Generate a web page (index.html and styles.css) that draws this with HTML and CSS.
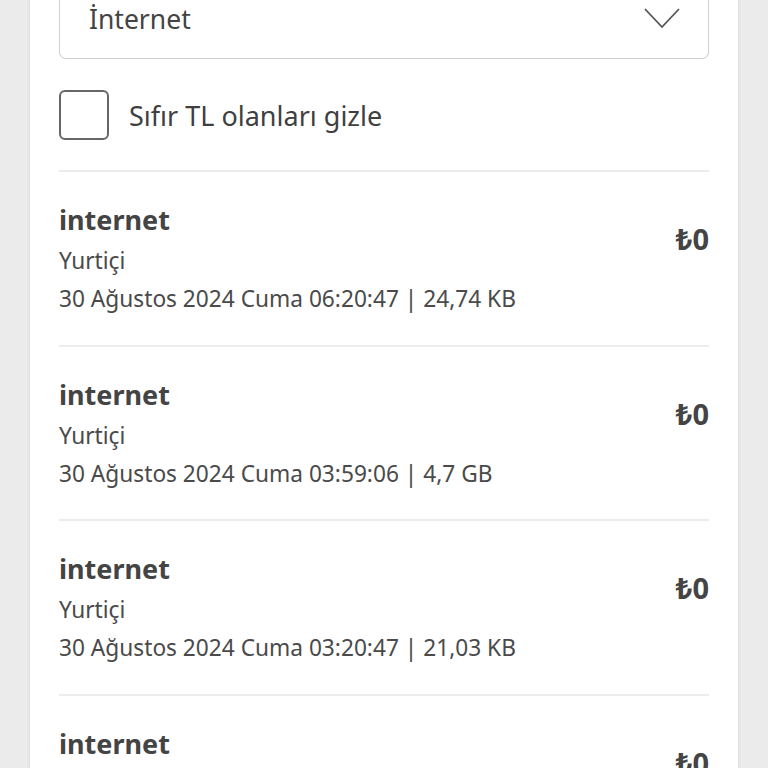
FILE: index.html
```html
<!DOCTYPE html>
<html lang="tr">
<head>
    <meta charset="UTF-8">
    <meta name="viewport" content="width=device-width, initial-scale=1.0">
    <title>Kullanım Detayları</title>
    <link rel="stylesheet" href="styles.css">
</head>
<body>
    <div class="card">
        <div class="select">
            <span class="select-value">İnternet</span>
            <svg class="chevron" width="36" height="22" viewBox="0 0 36 22">
                <path d="M1 1 L18 19 L35 1" fill="none" stroke="#555" stroke-width="1.8"/>
            </svg>
        </div>
        <label class="check">
            <span class="box"></span>
            <span class="check-label">Sıfır TL olanları gizle</span>
        </label>
        <ul class="list">
            <li class="item">
                <div class="info">
                    <div class="title">internet</div>
                    <div class="sub">Yurtiçi</div>
                    <div class="sub">30 Ağustos 2024 Cuma 06:20:47 | 24,74 KB</div>
                </div>
                <div class="amount">₺0</div>
            </li>
            <li class="item">
                <div class="info">
                    <div class="title">internet</div>
                    <div class="sub">Yurtiçi</div>
                    <div class="sub">30 Ağustos 2024 Cuma 03:59:06 | 4,7 GB</div>
                </div>
                <div class="amount">₺0</div>
            </li>
            <li class="item">
                <div class="info">
                    <div class="title">internet</div>
                    <div class="sub">Yurtiçi</div>
                    <div class="sub">30 Ağustos 2024 Cuma 03:20:47 | 21,03 KB</div>
                </div>
                <div class="amount">₺0</div>
            </li>
            <li class="item">
                <div class="info">
                    <div class="title">internet</div>
                    <div class="sub">Yurtiçi</div>
                    <div class="sub">30 Ağustos 2024 Cuma 02:40:12 | 12,5 KB</div>
                </div>
                <div class="amount">₺0</div>
            </li>
        </ul>
    </div>
</body>
</html>
```

FILE: styles.css
```css
body {
    margin: 0;
    padding: 0;
    background-color: #ebebeb;
    font-family: "Noto Sans", sans-serif;
    color: #4a4a4a;
    overflow: hidden;
    height: 768px;
}
.card {
    margin: 0 30px;
    padding: 0 29px;
    background: white;
    box-shadow: 0 0 3px rgba(0, 0, 0, 0.12);
    min-height: 900px;
}
.select {
    margin-top: -10px;
    height: 68px;
    border: 1.5px solid #cfcfcf;
    border-top: none;
    border-radius: 0 0 7px 7px;
    display: flex;
    align-items: center;
    justify-content: space-between;
    padding: 0 28px 0 29px;
}
.select-value {
    font-size: 26.5px;
    color: #444;
    margin-top: -10px;
}
.chevron {
    margin-top: -10px;
}
.check {
    display: flex;
    align-items: center;
    gap: 20px;
    margin-top: 31px;
    padding-bottom: 30px;
    border-bottom: 2px solid #ececec;
}
.box {
    width: 46px;
    height: 46px;
    border: 2px solid #666;
    border-radius: 6px;
}
.check-label {
    font-size: 27px;
    color: #3f3f3f;
}
.list {
    list-style: none;
    margin: 0;
    padding: 0;
}
.item {
    display: flex;
    justify-content: space-between;
    align-items: flex-start;
    padding: 30px 0 26.5px;
    border-bottom: 2px solid #ececec;
    height: 116px;
}
.title {
    font-size: 27px;
    font-weight: bold;
    line-height: 36px;
    color: #444;
    margin-bottom: 4px;
}
.sub {
    font-size: 22.7px;
    line-height: 38px;
    color: #4a4a4a;
}
.amount {
    font-size: 29px;
    font-weight: bold;
    color: #444;
    margin-top: 17px;
}
```
